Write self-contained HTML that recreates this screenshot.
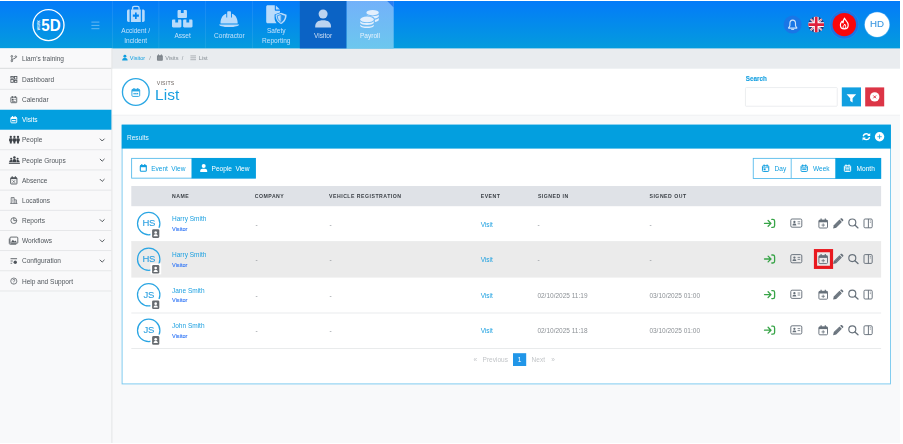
<!DOCTYPE html>
<html lang="en"><head><meta charset="utf-8"><title>Visits - List</title>
<style>
html,body{margin:0;padding:0}
body{width:903px;height:444px;position:relative;overflow:hidden;background:#fff;font-family:"Liberation Sans",sans-serif}
#app{position:absolute;left:0;top:1px;width:900px;height:442px;background:#f8f9fa}
.a{position:absolute;white-space:nowrap}
#ov{position:absolute;left:0;top:0}
#tx{position:absolute;left:0;top:0;width:903px;height:444px;will-change:transform}
.nvt{width:46.8px;text-align:center;font-size:6.56px;line-height:9.7px}
.st{font-size:6.56px;line-height:10px}
.bct{font-size:5.6px;line-height:7px;color:#868d94}
.bt{font-size:6.56px;line-height:8px}
.th{font-size:5.16px;line-height:6px;font-weight:bold;color:#3a3f45;letter-spacing:0.5px}
.nm{font-size:6.5px;line-height:8px;color:#1a9fe0}
.vs{font-size:5.6px;line-height:7px;color:#3478f6;-webkit-text-stroke:0.13px #3478f6}
.td{font-size:6.5px;line-height:8px;color:#8c9196}
.pg{font-size:6.5px;line-height:8px;color:#c2c5c8}
</style></head>
<body>
<div id="app"></div>
<div class="a" style="left:0px;top:48.4px;width:111.4px;height:394.6px;background:#f8f9fa"></div>
<div class="a" style="left:112.4px;top:48.4px;width:787.6px;height:20.3px;background:#e9ecef"></div>
<svg id="ov" width="903" height="444" viewBox="0 0 903 444">
<defs><linearGradient id="pg" x1="0" y1="0" x2="0" y2="1"><stop offset="0" stop-color="#73b1fa"/><stop offset="1" stop-color="#6cc7ee"/></linearGradient><clipPath id="fc"><circle cx="8" cy="8" r="8"/></clipPath><linearGradient id="hg" x1="0" y1="0" x2="0" y2="1"><stop offset="0" stop-color="#047bf9"/><stop offset="1" stop-color="#049cdd"/></linearGradient></defs>
<rect x="0" y="1" width="900" height="47.4" fill="url(#hg)"/>
<rect x="299.8" y="1" width="46.8" height="47.4" fill="#0b63c5"/>
<rect x="346.6" y="1" width="47.1" height="47.4" fill="url(#pg)"/>
<path d="M387.2 1H393.7V7.5Z" fill="#2a7ef2"/>
<rect x="112.2" y="1" width="0.6" height="47.4" fill="#fff" fill-opacity="0.14"/>
<rect x="158.6" y="1" width="0.6" height="47.4" fill="#fff" fill-opacity="0.14"/>
<rect x="205.4" y="1" width="0.6" height="47.4" fill="#fff" fill-opacity="0.14"/>
<rect x="252.4" y="1" width="0.6" height="47.4" fill="#fff" fill-opacity="0.14"/>
<circle cx="48.5" cy="25.1" r="15.5" fill="none" stroke="#fff" stroke-width="1.35"/>
<text x="41.2" y="30.7" textLength="19.4" lengthAdjust="spacingAndGlyphs" font-family="Liberation Sans, sans-serif" font-weight="bold" font-size="15.6" fill="#fff">5D</text>
<text transform="translate(39.8,30.3) rotate(-90)" textLength="10.2" lengthAdjust="spacingAndGlyphs" font-family="Liberation Sans, sans-serif" font-weight="bold" font-size="3.5" fill="#fff">WORK</text>
<path d="M91.4 22.1H99.4M91.4 25.4H99.4M91.4 28.7H99.4" stroke="#8ecbf6" stroke-width="0.7"/>
<svg x="127" y="5.7" width="17.7" height="16.3" viewBox="0 0 17.7 16.3" overflow="visible"><path d="M5.6 4V2.2C5.6 1.2 6.2 0.6 7.2 0.6H10.5C11.5 0.6 12.1 1.2 12.1 2.2V4" fill="none" stroke="#b9dbfb" stroke-width="1.3"/><path d="M0 5.4C0 4.4 0.7 3.7 1.7 3.7H2.6V16.3H1.7C0.7 16.3 0 15.6 0 14.6Z" fill="#b9dbfb"/><path d="M17.7 5.4C17.7 4.4 17 3.7 16 3.7H15.1V16.3H16C17 16.3 17.7 15.6 17.7 14.6Z" fill="#b9dbfb"/><path d="M3.9 3.7H13.8V16.3H3.9Z M8 6.7V8.9H5.8V11.1H8V13.3H9.7V11.1H11.9V8.9H9.7V6.7Z" fill="#b9dbfb" fill-rule="evenodd"/></svg>
<svg x="172" y="10" width="20.5" height="17.5" viewBox="0 0 20.5 17.5" overflow="visible"><path d="M6.75 0H8.85V3H11.649999999999999V0H13.75C14.45 0 14.95 0.5 14.95 1.2V6.9C14.95 7.6 14.45 8.1 13.75 8.1H6.75C6.05 8.1 5.55 7.6 5.55 6.9V1.2C5.55 0.5 6.05 0 6.75 0Z" fill="#b9dbfb"/><path d="M1.2 9.4H3.3V12.4H6.1V9.4H8.2C8.9 9.4 9.4 9.9 9.4 10.6V16.3C9.4 17 8.9 17.5 8.2 17.5H1.2C0.5 17.5 0 17 0 16.3V10.6C0 9.9 0.5 9.4 1.2 9.4Z" fill="#b9dbfb"/><path d="M12.299999999999999 9.4H14.399999999999999V12.4H17.2V9.4H19.299999999999997C20 9.4 20.5 9.9 20.5 10.6V16.3C20.5 17 20 17.5 19.299999999999997 17.5H12.299999999999999C11.6 17.5 11.1 17 11.1 16.3V10.6C11.1 9.9 11.6 9.4 12.299999999999999 9.4Z" fill="#b9dbfb"/></svg>
<svg x="218.9" y="11.1" width="20.4" height="16" viewBox="0 0 20.4 16" overflow="visible"><path d="M1.6 12.3C1.6 6.5 4.6 3.3 7.4 2.7V6.5H8.3V1.3C8.3 0.6 8.7 0.2 9.4 0.2H11C11.7 0.2 12.1 0.6 12.1 1.3V6.5H13V2.7C15.8 3.3 18.8 6.5 18.8 12.3Z" fill="#b9dbfb"/><path d="M0.2 13.3H20.2C20.2 14.6 16.5 15.9 10.2 15.9S0.2 14.6 0.2 13.3Z" fill="#b9dbfb"/></svg>
<svg x="266.2" y="5.3" width="20.6" height="18.8" viewBox="0 0 20.6 18.8" overflow="visible"><path d="M1.5 0H8.6V4.6C8.6 5.1 8.9 5.4 9.4 5.4H13.8V7.2L8.4 9.1V12.5C8.4 14.8 9.1 16.6 10.4 18H1.5C0.6 18 0 17.4 0 16.5V1.5C0 0.6 0.6 0 1.5 0Z" fill="#b9dbfb"/><path d="M9.7 0.1L13.7 4.2H9.7Z" fill="#b9dbfb"/><path d="M14.9 7.4L20.4 9.4C20.4 14 18.1 17.2 14.9 18.7C11.7 17.2 9.4 14 9.4 9.4Z" fill="#b9dbfb"/><path d="M14.9 9.1L18.8 10.5C18.7 13.7 17.2 15.9 14.9 17.1Z" fill="#1a8cec"/><path d="M14.9 9.1L11 10.5C11.1 13.7 12.6 15.9 14.9 17.1Z" fill="#b9dbfb" stroke="#1a8cec" stroke-width="0.8"/></svg>
<svg x="315.2" y="9.5" width="15.8" height="18" viewBox="0 0 15.8 18" overflow="visible"><circle cx="7.9" cy="4.5" r="4.5" fill="#bcd3f0"/><path d="M0 18V16.8C0 12.8 3 10.7 7.9 10.7S15.8 12.8 15.8 16.8V18Z" fill="#bcd3f0"/></svg>
<svg x="360" y="10" width="19" height="18" viewBox="0 0 19 18" overflow="visible"><g fill="#e3effd"><ellipse cx="12.6" cy="2.7" rx="6.2" ry="2.7"/><path d="M6.4 4.5C7.6 6.7 17.6 6.7 18.8 4.5V6.3C18.3 7.5 16.6 8.2 14.6 8.5C14.3 7.3 12 6.3 8.6 6.1C7.4 5.7 6.6 5.1 6.4 4.5Z"/><path d="M14.9 9.7C16.7 9.4 18.2 8.8 18.8 8V9.9C18.3 11 16.8 11.7 14.9 12Z"/><ellipse cx="7" cy="9.4" rx="6.8" ry="2.8"/><path d="M0.2 11.2C1.6 13.7 12.4 13.7 13.8 11.2V13C12.4 15.5 1.6 15.5 0.2 13Z"/><path d="M0.2 14.7C1.6 17.2 12.4 17.2 13.8 14.7V15.9C12.4 18.6 1.6 18.6 0.2 15.9Z"/></g></svg>
<circle cx="792.6" cy="24.6" r="9" fill="#1976e6"/>
<svg x="787.9" y="19.4" width="9.6" height="11" viewBox="0 0 9.6 11" overflow="visible"><path d="M4.8 0.7C2.9 0.7 2 2.2 2 4V6.2C2 7.1 1.5 7.7 0.7 8.3V8.7H8.9V8.3C8.1 7.7 7.6 7.1 7.6 6.2V4C7.6 2.2 6.7 0.7 4.8 0.7Z" fill="none" stroke="#cde4fb" stroke-width="1.15" stroke-linejoin="round"/><path d="M3.7 10.1H5.9" stroke="#cde4fb" stroke-width="0.9" stroke-linecap="round"/></svg>
<svg x="808.2" y="16.6" width="16" height="16" viewBox="0 0 16 16"><g clip-path="url(#fc)"><rect width="16" height="16" fill="#28397a"/><path d="M0 0L16 16M16 0L0 16" stroke="#fff" stroke-width="1.9"/><path d="M0 0L16 16M16 0L0 16" stroke="#d8203a" stroke-width="0.7"/><path d="M8 0V16M0 8H16" stroke="#fff" stroke-width="4.8"/><path d="M8 0V16M0 8H16" stroke="#e0203c" stroke-width="2.7"/></g></svg>
<circle cx="844.3" cy="24.6" r="14" fill="#1a74e6"/>
<circle cx="844.3" cy="24.6" r="14.6" fill="none" stroke="#2a86ee" stroke-width="0.8" stroke-opacity="0.6"/>
<circle cx="844.3" cy="24.6" r="11.7" fill="#fb0509"/>
<svg x="839.8" y="17.6" width="9" height="11.8" viewBox="0 0 9 11.8" overflow="visible"><path d="M4.7 0.6C5.1 2.4 8.4 4 8.4 7.3C8.4 9.7 6.7 11.2 4.5 11.2S0.6 9.7 0.6 7.3C0.6 5.7 1.4 4.5 2.3 3.5C2.5 4.3 2.8 4.8 3.3 5.2C3.4 3.4 3.9 1.8 4.7 0.6Z" fill="none" stroke="#fff" stroke-width="1.2" stroke-linejoin="round"/><path d="M4.5 11C3.3 10.7 2.9 9.4 3.7 8.4C4.3 7.7 4.8 7.2 4.8 6.4C6 7.5 6.5 10.3 4.5 11Z" fill="none" stroke="#fff" stroke-width="1" stroke-linejoin="round"/></svg>
<circle cx="877.1" cy="24.6" r="12.9" fill="#d3ebfc" fill-opacity="0.35"/>
<circle cx="877.1" cy="24.6" r="12.3" fill="#fff"/>
<rect x="0" y="48.4" width="111.4" height="242.6" fill="#f9f9fa"/>
<rect x="111.4" y="48.4" width="1" height="394.6" fill="#e3e5e7"/>
<rect x="0" y="109.74" width="111.4" height="19.97" fill="#039fdf"/>
<rect x="0" y="67.8" width="111.4" height="1" fill="#d9dbdd"/>
<rect x="0" y="88.87" width="111.4" height="0.8" fill="#e1e3e5"/>
<rect x="0" y="149.38" width="111.4" height="0.8" fill="#e1e3e5"/>
<rect x="0" y="169.55" width="111.4" height="0.8" fill="#e1e3e5"/>
<rect x="0" y="189.72" width="111.4" height="0.8" fill="#e1e3e5"/>
<rect x="0" y="209.89" width="111.4" height="0.8" fill="#e1e3e5"/>
<rect x="0" y="230.06" width="111.4" height="0.8" fill="#e1e3e5"/>
<rect x="0" y="250.23" width="111.4" height="0.8" fill="#e1e3e5"/>
<rect x="0" y="270.4" width="111.4" height="0.8" fill="#e1e3e5"/>
<rect x="0" y="290.57" width="111.4" height="0.8" fill="#e1e3e5"/>
<svg x="9.9" y="54.7" width="7.8" height="7.8" viewBox="0 0 24 24" overflow="visible"><circle cx="6" cy="5" r="2.6" fill="none" stroke="#50565c" stroke-width="2.4"/><circle cx="6" cy="19" r="2.6" fill="none" stroke="#50565c" stroke-width="2.4"/><circle cx="18" cy="6" r="2.6" fill="none" stroke="#50565c" stroke-width="2.4"/><path d="M6 8V16M18 9C18 13 6 12 6 16" fill="none" stroke="#50565c" stroke-width="2.4"/></svg>
<svg x="9.9" y="75.5" width="7.8" height="7.8" viewBox="0 0 24 24" overflow="visible"><g fill="none" stroke="#50565c" stroke-width="2.6"><rect x="3" y="3" width="7.5" height="5"/><rect x="14" y="3" width="7.5" height="8"/><rect x="3" y="12" width="7.5" height="9"/><rect x="14" y="15" width="7.5" height="6"/></g></svg>
<svg x="9.9" y="95.7" width="7.8" height="7.8" viewBox="0 0 24 24" overflow="visible"><rect x="3" y="4.5" width="18" height="17" rx="1.5" fill="none" stroke="#50565c" stroke-width="2.6"/><path d="M7.5 1V7.5M16.5 1V7.5" stroke="#50565c" stroke-width="2.8"/><rect x="6" y="9.5" width="5.5" height="5.5" fill="#50565c"/><path d="M14 11.5H18M6.5 18H17.5" stroke="#50565c" stroke-width="2"/></svg>
<svg x="9.9" y="115.7" width="7.8" height="7.8" viewBox="0 0 24 24" overflow="visible"><rect x="3" y="5" width="18" height="17" rx="2.5" fill="none" stroke="#fff" stroke-width="2.8"/><rect x="3" y="5" width="18" height="5" fill="#fff"/><rect x="6.5" y="1" width="3" height="6.5" rx="1" fill="#fff"/><rect x="14.5" y="1" width="3" height="6.5" rx="1" fill="#fff"/><rect x="6.5" y="13.5" width="11" height="3.6" fill="#fff"/></svg>
<svg x="8.9" y="135.8" width="11" height="7.8" viewBox="0 0 11 7.8" overflow="visible"><g fill="#3d4248"><circle cx="1.9" cy="1.15" r="1.15"/><rect x="0.15" y="2.5" width="3.5" height="3.4" rx="1.1"/><rect x="0.95" y="4.8" width="1.9" height="2.9" rx="0.3"/><circle cx="5.5" cy="1.15" r="1.15"/><rect x="3.75" y="2.5" width="3.5" height="3.4" rx="1.1"/><rect x="4.55" y="4.8" width="1.9" height="2.9" rx="0.3"/><circle cx="9.1" cy="1.15" r="1.15"/><rect x="7.35" y="2.5" width="3.5" height="3.4" rx="1.1"/><rect x="8.15" y="4.8" width="1.9" height="2.9" rx="0.3"/></g></svg>
<path d="M99.9 138.7L102.2 141L104.5 138.7" fill="none" stroke="#4a4f54" stroke-width="0.95"/>
<svg x="8.9" y="156.1" width="11" height="7.8" viewBox="0 0 11 7.8" overflow="visible"><g fill="#3d4248"><circle cx="5.5" cy="1.3" r="1.25"/><circle cx="2.3" cy="2.6" r="1.05"/><circle cx="8.7" cy="2.6" r="1.05"/><path d="M3.3 6.2C3.3 3.9 4.2 2.9 5.5 2.9S7.7 3.9 7.7 6.2Z"/><path d="M0.3 6.2C0.3 4.7 1 3.9 2.3 3.9C2.8 3.9 3.1 4 3.3 4.3L2.9 6.2Z"/><path d="M10.7 6.2C10.7 4.7 10 3.9 8.7 3.9C8.2 3.9 7.9 4 7.7 4.3L8.1 6.2Z"/><rect x="0" y="6.7" width="11" height="1"/></g></svg>
<path d="M99.9 158.9L102.2 161.2L104.5 158.9" fill="none" stroke="#4a4f54" stroke-width="0.95"/>
<svg x="9.6" y="176.1" width="8.4" height="8.4" viewBox="0 0 24 24" overflow="visible"><rect x="3" y="5" width="18" height="17.5" rx="1.5" fill="none" stroke="#50565c" stroke-width="2.6"/><path d="M7.5 0.5V6M16.5 0.5V6" stroke="#50565c" stroke-width="3.2"/><rect x="3" y="4" width="18" height="4.5" fill="#50565c"/><path d="M8.5 12L15.5 19M15.5 12L8.5 19" stroke="#50565c" stroke-width="2.2"/></svg>
<path d="M99.9 179.1L102.2 181.4L104.5 179.1" fill="none" stroke="#4a4f54" stroke-width="0.95"/>
<svg x="9.9" y="196.6" width="7.8" height="7.8" viewBox="0 0 24 24" overflow="visible"><g fill="none" stroke="#50565c" stroke-width="2.2"><path d="M4 21V3H13V21M13 10H20V21M1 21H23"/><path d="M7.5 7H9.5M7.5 11.5H9.5M7.5 16H9.5M16 14H17.5M16 17.5H17.5" stroke-width="2"/></g></svg>
<svg x="9.9" y="216.7" width="7.8" height="7.8" viewBox="0 0 24 24" overflow="visible"><circle cx="12" cy="12" r="9" fill="none" stroke="#50565c" stroke-width="2.4"/><path d="M12 3V12H21" fill="none" stroke="#50565c" stroke-width="2.4"/></svg>
<path d="M99.9 219.4L102.2 221.7L104.5 219.4" fill="none" stroke="#4a4f54" stroke-width="0.95"/>
<svg x="8.8" y="236.1" width="9.4" height="9.4" viewBox="0 0 24 24" overflow="visible"><rect x="3" y="2.5" width="20" height="16" rx="2.5" fill="none" stroke="#50565c" stroke-width="2.2"/><path d="M1.2 6.5V18.5C1.2 20.2 2 21 3.7 21H19" fill="none" stroke="#50565c" stroke-width="2"/><path d="M5 16.5L10.5 9.5L14 13.5L16.5 11.5L21 16.5Z" fill="#50565c"/></svg>
<path d="M99.9 239.6L102.2 241.9L104.5 239.6" fill="none" stroke="#4a4f54" stroke-width="0.95"/>
<svg x="9.9" y="257.1" width="7.8" height="7.8" viewBox="0 0 24 24" overflow="visible"><path d="M2 5H22" stroke="#50565c" stroke-width="2.8"/><path d="M2 12H9M2 19H7" stroke="#50565c" stroke-width="2.4"/><circle cx="16.5" cy="16" r="5.2" fill="#50565c"/></svg>
<path d="M99.9 259.8L102.2 262.1L104.5 259.8" fill="none" stroke="#4a4f54" stroke-width="0.95"/>
<svg x="9.9" y="277.2" width="7.8" height="7.8" viewBox="0 0 24 24" overflow="visible"><circle cx="12" cy="12" r="9.5" fill="none" stroke="#50565c" stroke-width="2.2"/><path d="M9 9.5C9 5.5 15 5.5 15 9.5C15 11.5 12 11.8 12 14.5" fill="none" stroke="#50565c" stroke-width="2.2"/><circle cx="12" cy="18" r="1.4" fill="#50565c"/></svg>
<svg x="121.6" y="54.4" width="6.6" height="6.6" viewBox="0 0 24 24" overflow="visible"><circle cx="12" cy="7" r="5.4" fill="#109fe0"/><path d="M2 22.5C2 15.5 6.5 13.5 12 13.5S22 15.5 22 22.5Z" fill="#109fe0"/></svg>
<svg x="156.2" y="54" width="7.4" height="7.4" viewBox="0 0 24 24" overflow="visible"><rect x="2.5" y="4" width="19" height="18" rx="2.5" fill="#7d848b"/><rect x="6" y="1" width="3" height="6" rx="1" fill="#7d848b"/><rect x="15" y="1" width="3" height="6" rx="1" fill="#7d848b"/><path d="M6 12.5H18M6 16.5H18" stroke="#a9aeb3" stroke-width="1.2"/></svg>
<path d="M190.4 55.9H196M190.4 57.8H196M190.4 59.7H196" stroke="#8f959b" stroke-width="0.65"/>
<rect x="112.4" y="68.7" width="787.6" height="46.1" fill="#fff"/>
<rect x="112.4" y="114.8" width="787.6" height="0.7" fill="#eceef0"/>
<circle cx="135.8" cy="92" r="13.35" fill="none" stroke="#2ca8e4" stroke-width="1.35"/>
<svg x="130.5" y="87.1" width="10.6" height="10.4" viewBox="0 0 24 24" overflow="visible"><rect x="3" y="5" width="18" height="16.5" rx="2.5" fill="none" stroke="#29a6e3" stroke-width="2.2"/><rect x="3" y="5" width="18" height="5" fill="#29a6e3"/><rect x="6.5" y="2" width="2.6" height="5" rx="1" fill="#29a6e3"/><rect x="14.9" y="2" width="2.6" height="5" rx="1" fill="#29a6e3"/><rect x="6.5" y="13.5" width="11" height="3.2" fill="#29a6e3"/><path d="M10 13.5V16.7M14 13.5V16.7" stroke="#fff" stroke-width="0.8"/></svg>
<rect x="745.45" y="87.55" width="91.8" height="18.7" rx="0.8" fill="#fff" stroke="#dfe2e5" stroke-width="0.6"/>
<rect x="841.8" y="87.4" width="19.2" height="19" fill="#119fe0"/>
<path d="M846.6 94.2H856.2L852.6 98.3V102.6L850.2 101V98.3Z" fill="#fff"/>
<rect x="865.2" y="87.4" width="19" height="19" fill="#dc3546"/>
<circle cx="874.7" cy="96.9" r="4.7" fill="#fff"/><path d="M873.3 95.5L876.1 98.3M876.1 95.5L873.3 98.3" stroke="#dc3546" stroke-width="1"/>
<rect x="122.1" y="125.1" width="768.4" height="258.8" fill="#fff" stroke="#74c7ee" stroke-width="0.9"/>
<rect x="121.7" y="124.7" width="769.2" height="23.9" fill="#039fdf"/>
<svg x="861.9" y="132.3" width="9" height="8.8" viewBox="0 0 20 19" overflow="visible"><g fill="none" stroke="#fff" stroke-width="3"><path d="M3 8.5C3.8 5 6.5 3 10 3C12.5 3 14.5 4 16 6"/><path d="M17 10.5C16.2 14 13.5 16 10 16C7.5 16 5.5 15 4 13"/></g><path d="M18.5 1V8H11.5Z" fill="#fff"/><path d="M1.5 18V11H8.5Z" fill="#fff"/></svg>
<circle cx="879.55" cy="136.7" r="4.7" fill="#fff"/><path d="M879.55 134.5V138.9M877.35 136.7H881.75" stroke="#0a9fdf" stroke-width="0.8"/>
<rect x="131.65" y="158.35" width="123.8" height="19.8" fill="#fff" stroke="#4db7ea" stroke-width="0.85"/>
<rect x="191.5" y="158" width="64.3" height="20.4" fill="#039fdf"/>
<svg x="139.7" y="164.1" width="7.2" height="7.8" viewBox="0 0 7.2 7.8" overflow="visible"><rect x="0.6" y="1.5" width="6" height="5.7" rx="0.9" fill="none" stroke="#119fe0" stroke-width="1.1"/><rect x="0.3" y="1.2" width="6.6" height="1.9" fill="#119fe0"/><path d="M2.1 0V2M5.1 0V2" stroke="#119fe0" stroke-width="1.1"/></svg>
<svg x="200.2" y="164.1" width="7" height="7.8" viewBox="0 0 7 7.8" overflow="visible"><circle cx="3.5" cy="2" r="2" fill="#fff"/><path d="M0 7.8V6.9C0 5.5 1.1 4.7 2.2 4.7H4.8C5.9 4.7 7 5.5 7 6.9V7.8Z" fill="#fff"/></svg>
<rect x="753.25" y="158.35" width="127.5" height="20.2" fill="#fff" stroke="#4db7ea" stroke-width="0.85"/>
<rect x="790.7" y="158.35" width="1" height="20.2" fill="#6cc4ee"/>
<rect x="835.3" y="158" width="45.8" height="20.8" fill="#039fdf"/>
<svg x="761.9" y="164.5" width="7.4" height="7.4" viewBox="0 0 7.4 7.4" overflow="visible"><rect x="0.55" y="1.25" width="6.3" height="5.7" rx="0.8" fill="none" stroke="#119fe0" stroke-width="1"/><path d="M2.2 0.1V2.2M5.2 0.1V2.2" stroke="#119fe0" stroke-width="1.05"/><path d="M0.6 3.1H6.8" stroke="#119fe0" stroke-width="0.6"/><rect x="1.7" y="3.9" width="2" height="1.8" fill="#119fe0"/></svg>
<svg x="800.5" y="164.5" width="7.4" height="7.4" viewBox="0 0 7.4 7.4" overflow="visible"><rect x="0.55" y="1.25" width="6.3" height="5.7" rx="0.8" fill="none" stroke="#119fe0" stroke-width="1"/><path d="M2.2 0.1V2.2M5.2 0.1V2.2" stroke="#119fe0" stroke-width="1.05"/><path d="M0.6 3.1H6.8" stroke="#119fe0" stroke-width="0.6"/><rect x="1.7" y="4" width="4" height="1.3" fill="#119fe0"/></svg>
<svg x="843.8" y="164.5" width="7.4" height="7.4" viewBox="0 0 7.4 7.4" overflow="visible"><rect x="0.55" y="1.25" width="6.3" height="5.7" rx="0.8" fill="none" stroke="#fff" stroke-width="1"/><path d="M2.2 0.1V2.2M5.2 0.1V2.2" stroke="#fff" stroke-width="1.05"/><path d="M0.6 3.1H6.8" stroke="#fff" stroke-width="0.6"/><rect x="1.7" y="3.8" width="4" height="0.8" fill="#fff"/><rect x="1.7" y="5.1" width="4" height="0.8" fill="#fff"/></svg>
<rect x="131.3" y="186" width="749.8" height="20.2" fill="#dfe2e7"/>
<rect x="131.3" y="241.4" width="749.8" height="0.8" fill="#e4e6e8"/>
<circle cx="148.7" cy="223.6" r="11.2" fill="none" stroke="#2aa5e3" stroke-width="1.25"/>
<rect x="150.4" y="227.8" width="10.8" height="11" fill="#fff"/>
<rect x="152.1" y="229.3" width="7.2" height="8.6" rx="1.3" fill="#666b70"/><circle cx="155.7" cy="232.5" r="1.35" fill="#fff"/><path d="M153.6 236.3C153.6 234.7 154.5 234.3 155.7 234.3S157.8 234.7 157.8 236.3Z" fill="#fff"/>
<svg x="764.2" y="218.8" width="11" height="9.2" viewBox="0 0 11 9.2" overflow="visible"><path d="M0.3 4.6H6.4M3.9 1.7L6.8 4.6L3.9 7.5" fill="none" stroke="#37a447" stroke-width="1.3" stroke-linecap="round" stroke-linejoin="round"/><path d="M7.6 0.6H8.7C9.8 0.6 10.4 1.2 10.4 2.3V6.9C10.4 8 9.8 8.6 8.7 8.6H7.6" fill="none" stroke="#37a447" stroke-width="1.3" stroke-linecap="round"/></svg>
<svg x="790.3" y="218.5" width="12" height="9.2" viewBox="0 0 12 9.2" overflow="visible"><rect x="0.5" y="0.5" width="11" height="8.2" rx="1.3" fill="none" stroke="#66707a" stroke-width="0.95"/><circle cx="4.1" cy="3.5" r="1.15" fill="#66707a"/><path d="M2.2 6.9C2.2 5.4 3 5.1 4.1 5.1S6 5.4 6 6.9Z" fill="#66707a"/><path d="M7.3 3.3H9.9M7.3 5.3H9.9" stroke="#66707a" stroke-width="0.8"/></svg>
<svg x="818.4" y="218.5" width="9.6" height="10" viewBox="0 0 9.6 10" overflow="visible"><rect x="0.5" y="1.6" width="8.6" height="7.9" rx="1" fill="none" stroke="#66707a" stroke-width="0.95"/><rect x="0.5" y="1.5" width="8.6" height="2.3" fill="#66707a"/><path d="M2.7 0V2M6.9 0V2" stroke="#66707a" stroke-width="1.2"/><path d="M4.8 4.9V8.3M3.1 6.6H6.5" stroke="#66707a" stroke-width="0.8"/></svg>
<svg x="832.9" y="218.2" width="10.5" height="10.4" viewBox="0 0 10.5 10.4" overflow="visible"><path d="M0.2 10.2L0.9 7.1L6.6 1.4L9 3.8L3.3 9.5Z" fill="#66707a"/><path d="M7.2 0.8L7.8 0.25C8.2 -0.1 8.8 -0.1 9.2 0.25L10.2 1.25C10.55 1.65 10.55 2.2 10.2 2.6L9.6 3.2Z" fill="#66707a"/><path d="M2 7.4L6.7 2.7M3 8.4L7.7 3.7" stroke="#fff" stroke-opacity="0.35" stroke-width="0.4"/></svg>
<svg x="848" y="218.2" width="10.6" height="10.2" viewBox="0 0 10.6 10.2" overflow="visible"><circle cx="4.3" cy="4.3" r="3.5" fill="none" stroke="#66707a" stroke-width="1.15"/><path d="M6.9 6.9L10 9.7" stroke="#66707a" stroke-width="1.3" stroke-linecap="round"/></svg>
<svg x="863.5" y="218.5" width="9.2" height="9.8" viewBox="0 0 9.2 9.8" overflow="visible"><rect x="0.5" y="0.5" width="8.2" height="8.8" rx="1.1" fill="none" stroke="#66707a" stroke-width="0.95"/><path d="M4.9 0.5V9.3" stroke="#66707a" stroke-width="0.95"/><path d="M6.3 2.4H7.5M6.3 3.9H7.5" stroke="#66707a" stroke-width="0.6"/></svg>
<rect x="131.3" y="241.3" width="749.8" height="36.3" fill="#ebebeb"/>
<circle cx="148.7" cy="259.2" r="11.2" fill="none" stroke="#2aa5e3" stroke-width="1.25"/>
<rect x="150.4" y="263.4" width="10.8" height="11" fill="#fff"/>
<rect x="152.1" y="264.9" width="7.2" height="8.6" rx="1.3" fill="#666b70"/><circle cx="155.7" cy="268.1" r="1.35" fill="#fff"/><path d="M153.6 271.9C153.6 270.3 154.5 269.9 155.7 269.9S157.8 270.3 157.8 271.9Z" fill="#fff"/>
<svg x="764.2" y="254.4" width="11" height="9.2" viewBox="0 0 11 9.2" overflow="visible"><path d="M0.3 4.6H6.4M3.9 1.7L6.8 4.6L3.9 7.5" fill="none" stroke="#37a447" stroke-width="1.3" stroke-linecap="round" stroke-linejoin="round"/><path d="M7.6 0.6H8.7C9.8 0.6 10.4 1.2 10.4 2.3V6.9C10.4 8 9.8 8.6 8.7 8.6H7.6" fill="none" stroke="#37a447" stroke-width="1.3" stroke-linecap="round"/></svg>
<svg x="790.3" y="254.1" width="12" height="9.2" viewBox="0 0 12 9.2" overflow="visible"><rect x="0.5" y="0.5" width="11" height="8.2" rx="1.3" fill="none" stroke="#66707a" stroke-width="0.95"/><circle cx="4.1" cy="3.5" r="1.15" fill="#66707a"/><path d="M2.2 6.9C2.2 5.4 3 5.1 4.1 5.1S6 5.4 6 6.9Z" fill="#66707a"/><path d="M7.3 3.3H9.9M7.3 5.3H9.9" stroke="#66707a" stroke-width="0.8"/></svg>
<rect x="815.5" y="250.65" width="16" height="16.7" fill="none" stroke="#e8191f" stroke-width="3.2"/>
<svg x="818.4" y="254.1" width="9.6" height="10" viewBox="0 0 9.6 10" overflow="visible"><rect x="0.5" y="1.6" width="8.6" height="7.9" rx="1" fill="none" stroke="#66707a" stroke-width="0.95"/><rect x="0.5" y="1.5" width="8.6" height="2.3" fill="#66707a"/><path d="M2.7 0V2M6.9 0V2" stroke="#66707a" stroke-width="1.2"/><path d="M4.8 4.9V8.3M3.1 6.6H6.5" stroke="#66707a" stroke-width="0.8"/></svg>
<svg x="832.9" y="253.8" width="10.5" height="10.4" viewBox="0 0 10.5 10.4" overflow="visible"><path d="M0.2 10.2L0.9 7.1L6.6 1.4L9 3.8L3.3 9.5Z" fill="#66707a"/><path d="M7.2 0.8L7.8 0.25C8.2 -0.1 8.8 -0.1 9.2 0.25L10.2 1.25C10.55 1.65 10.55 2.2 10.2 2.6L9.6 3.2Z" fill="#66707a"/><path d="M2 7.4L6.7 2.7M3 8.4L7.7 3.7" stroke="#fff" stroke-opacity="0.35" stroke-width="0.4"/></svg>
<svg x="848" y="253.8" width="10.6" height="10.2" viewBox="0 0 10.6 10.2" overflow="visible"><circle cx="4.3" cy="4.3" r="3.5" fill="none" stroke="#66707a" stroke-width="1.15"/><path d="M6.9 6.9L10 9.7" stroke="#66707a" stroke-width="1.3" stroke-linecap="round"/></svg>
<svg x="863.5" y="254.1" width="9.2" height="9.8" viewBox="0 0 9.2 9.8" overflow="visible"><rect x="0.5" y="0.5" width="8.2" height="8.8" rx="1.1" fill="none" stroke="#66707a" stroke-width="0.95"/><path d="M4.9 0.5V9.3" stroke="#66707a" stroke-width="0.95"/><path d="M6.3 2.4H7.5M6.3 3.9H7.5" stroke="#66707a" stroke-width="0.6"/></svg>
<rect x="131.3" y="312.6" width="749.8" height="0.8" fill="#e4e6e8"/>
<circle cx="148.7" cy="294.8" r="11.2" fill="none" stroke="#2aa5e3" stroke-width="1.25"/>
<rect x="150.4" y="299" width="10.8" height="11" fill="#fff"/>
<rect x="152.1" y="300.5" width="7.2" height="8.6" rx="1.3" fill="#666b70"/><circle cx="155.7" cy="303.7" r="1.35" fill="#fff"/><path d="M153.6 307.5C153.6 305.9 154.5 305.5 155.7 305.5S157.8 305.9 157.8 307.5Z" fill="#fff"/>
<svg x="764.2" y="290" width="11" height="9.2" viewBox="0 0 11 9.2" overflow="visible"><path d="M0.3 4.6H6.4M3.9 1.7L6.8 4.6L3.9 7.5" fill="none" stroke="#37a447" stroke-width="1.3" stroke-linecap="round" stroke-linejoin="round"/><path d="M7.6 0.6H8.7C9.8 0.6 10.4 1.2 10.4 2.3V6.9C10.4 8 9.8 8.6 8.7 8.6H7.6" fill="none" stroke="#37a447" stroke-width="1.3" stroke-linecap="round"/></svg>
<svg x="790.3" y="289.7" width="12" height="9.2" viewBox="0 0 12 9.2" overflow="visible"><rect x="0.5" y="0.5" width="11" height="8.2" rx="1.3" fill="none" stroke="#66707a" stroke-width="0.95"/><circle cx="4.1" cy="3.5" r="1.15" fill="#66707a"/><path d="M2.2 6.9C2.2 5.4 3 5.1 4.1 5.1S6 5.4 6 6.9Z" fill="#66707a"/><path d="M7.3 3.3H9.9M7.3 5.3H9.9" stroke="#66707a" stroke-width="0.8"/></svg>
<svg x="818.4" y="289.7" width="9.6" height="10" viewBox="0 0 9.6 10" overflow="visible"><rect x="0.5" y="1.6" width="8.6" height="7.9" rx="1" fill="none" stroke="#66707a" stroke-width="0.95"/><rect x="0.5" y="1.5" width="8.6" height="2.3" fill="#66707a"/><path d="M2.7 0V2M6.9 0V2" stroke="#66707a" stroke-width="1.2"/><path d="M4.8 4.9V8.3M3.1 6.6H6.5" stroke="#66707a" stroke-width="0.8"/></svg>
<svg x="832.9" y="289.4" width="10.5" height="10.4" viewBox="0 0 10.5 10.4" overflow="visible"><path d="M0.2 10.2L0.9 7.1L6.6 1.4L9 3.8L3.3 9.5Z" fill="#66707a"/><path d="M7.2 0.8L7.8 0.25C8.2 -0.1 8.8 -0.1 9.2 0.25L10.2 1.25C10.55 1.65 10.55 2.2 10.2 2.6L9.6 3.2Z" fill="#66707a"/><path d="M2 7.4L6.7 2.7M3 8.4L7.7 3.7" stroke="#fff" stroke-opacity="0.35" stroke-width="0.4"/></svg>
<svg x="848" y="289.4" width="10.6" height="10.2" viewBox="0 0 10.6 10.2" overflow="visible"><circle cx="4.3" cy="4.3" r="3.5" fill="none" stroke="#66707a" stroke-width="1.15"/><path d="M6.9 6.9L10 9.7" stroke="#66707a" stroke-width="1.3" stroke-linecap="round"/></svg>
<svg x="863.5" y="289.7" width="9.2" height="9.8" viewBox="0 0 9.2 9.8" overflow="visible"><rect x="0.5" y="0.5" width="8.2" height="8.8" rx="1.1" fill="none" stroke="#66707a" stroke-width="0.95"/><path d="M4.9 0.5V9.3" stroke="#66707a" stroke-width="0.95"/><path d="M6.3 2.4H7.5M6.3 3.9H7.5" stroke="#66707a" stroke-width="0.6"/></svg>
<rect x="131.3" y="348.2" width="749.8" height="0.8" fill="#e4e6e8"/>
<circle cx="148.7" cy="330.4" r="11.2" fill="none" stroke="#2aa5e3" stroke-width="1.25"/>
<rect x="150.4" y="334.6" width="10.8" height="11" fill="#fff"/>
<rect x="152.1" y="336.1" width="7.2" height="8.6" rx="1.3" fill="#666b70"/><circle cx="155.7" cy="339.3" r="1.35" fill="#fff"/><path d="M153.6 343.1C153.6 341.5 154.5 341.1 155.7 341.1S157.8 341.5 157.8 343.1Z" fill="#fff"/>
<svg x="764.2" y="325.6" width="11" height="9.2" viewBox="0 0 11 9.2" overflow="visible"><path d="M0.3 4.6H6.4M3.9 1.7L6.8 4.6L3.9 7.5" fill="none" stroke="#37a447" stroke-width="1.3" stroke-linecap="round" stroke-linejoin="round"/><path d="M7.6 0.6H8.7C9.8 0.6 10.4 1.2 10.4 2.3V6.9C10.4 8 9.8 8.6 8.7 8.6H7.6" fill="none" stroke="#37a447" stroke-width="1.3" stroke-linecap="round"/></svg>
<svg x="790.3" y="325.3" width="12" height="9.2" viewBox="0 0 12 9.2" overflow="visible"><rect x="0.5" y="0.5" width="11" height="8.2" rx="1.3" fill="none" stroke="#66707a" stroke-width="0.95"/><circle cx="4.1" cy="3.5" r="1.15" fill="#66707a"/><path d="M2.2 6.9C2.2 5.4 3 5.1 4.1 5.1S6 5.4 6 6.9Z" fill="#66707a"/><path d="M7.3 3.3H9.9M7.3 5.3H9.9" stroke="#66707a" stroke-width="0.8"/></svg>
<svg x="818.4" y="325.3" width="9.6" height="10" viewBox="0 0 9.6 10" overflow="visible"><rect x="0.5" y="1.6" width="8.6" height="7.9" rx="1" fill="none" stroke="#66707a" stroke-width="0.95"/><rect x="0.5" y="1.5" width="8.6" height="2.3" fill="#66707a"/><path d="M2.7 0V2M6.9 0V2" stroke="#66707a" stroke-width="1.2"/><path d="M4.8 4.9V8.3M3.1 6.6H6.5" stroke="#66707a" stroke-width="0.8"/></svg>
<svg x="832.9" y="325" width="10.5" height="10.4" viewBox="0 0 10.5 10.4" overflow="visible"><path d="M0.2 10.2L0.9 7.1L6.6 1.4L9 3.8L3.3 9.5Z" fill="#66707a"/><path d="M7.2 0.8L7.8 0.25C8.2 -0.1 8.8 -0.1 9.2 0.25L10.2 1.25C10.55 1.65 10.55 2.2 10.2 2.6L9.6 3.2Z" fill="#66707a"/><path d="M2 7.4L6.7 2.7M3 8.4L7.7 3.7" stroke="#fff" stroke-opacity="0.35" stroke-width="0.4"/></svg>
<svg x="848" y="325" width="10.6" height="10.2" viewBox="0 0 10.6 10.2" overflow="visible"><circle cx="4.3" cy="4.3" r="3.5" fill="none" stroke="#66707a" stroke-width="1.15"/><path d="M6.9 6.9L10 9.7" stroke="#66707a" stroke-width="1.3" stroke-linecap="round"/></svg>
<svg x="863.5" y="325.3" width="9.2" height="9.8" viewBox="0 0 9.2 9.8" overflow="visible"><rect x="0.5" y="0.5" width="8.2" height="8.8" rx="1.1" fill="none" stroke="#66707a" stroke-width="0.95"/><path d="M4.9 0.5V9.3" stroke="#66707a" stroke-width="0.95"/><path d="M6.3 2.4H7.5M6.3 3.9H7.5" stroke="#66707a" stroke-width="0.6"/></svg>
<rect x="513" y="353.2" width="13.2" height="12.8" fill="#2196e8"/>
</svg>
<div id="tx">
<div class="a nvt" style="left:112.3px;top:26px;color:#c3e1fb">Accident /<br>Incident</div>
<div class="a nvt" style="left:159.2px;top:31px;color:#c3e1fb">Asset</div>
<div class="a nvt" style="left:206px;top:31px;color:#c3e1fb">Contractor</div>
<div class="a nvt" style="left:252.9px;top:26px;color:#c3e1fb">Safety<br>Reporting</div>
<div class="a nvt" style="left:299.7px;top:31px;color:#cfdff4">Visitor</div>
<div class="a nvt" style="left:346.6px;top:31px;color:#e6f2fd">Payroll</div>
<div class="a " style="left:864.8px;top:19px;width:24.6px;text-align:center;font-size:9.7px;line-height:10px;color:#3a97e0;-webkit-text-stroke:0.1px #3a97e0">HD</div>
<div class="a st" style="left:22px;top:54px;color:#50565c">Liam's training</div>
<div class="a st" style="left:22px;top:75px;color:#50565c">Dashboard</div>
<div class="a st" style="left:22px;top:95px;color:#50565c">Calendar</div>
<div class="a st" style="left:22px;top:115px;color:#fff">Visits</div>
<div class="a st" style="left:22px;top:135px;color:#50565c">People</div>
<div class="a st" style="left:22px;top:156px;color:#50565c">People Groups</div>
<div class="a st" style="left:22px;top:176px;color:#50565c">Absence</div>
<div class="a st" style="left:22px;top:196px;color:#50565c">Locations</div>
<div class="a st" style="left:22px;top:216px;color:#50565c">Reports</div>
<div class="a st" style="left:22px;top:236px;color:#50565c">Workflows</div>
<div class="a st" style="left:22px;top:256px;color:#50565c">Configuration</div>
<div class="a st" style="left:22px;top:277px;color:#50565c">Help and Support</div>
<div class="a bct" style="left:129.8px;top:55px;color:#109fe0">Visitor</div>
<div class="a bct" style="left:149.2px;top:55px;">/</div>
<div class="a bct" style="left:165.2px;top:55px;">Visits</div>
<div class="a bct" style="left:181.8px;top:55px;">/</div>
<div class="a bct" style="left:198.8px;top:55px;">List</div>
<div class="a " style="left:156.8px;top:80px;font-size:5.2px;line-height:6px;color:#6d6460;letter-spacing:0.2px">VISITS</div>
<div class="a " style="left:155.1px;top:86px;font-size:15.5px;line-height:17.6px;color:#1a9fe0">List</div>
<div class="a " style="left:745.8px;top:75px;font-size:6.3px;line-height:7px;font-weight:bold;color:#149fe0;-webkit-text-stroke:0.1px #149fe0">Search</div>
<div class="a " style="left:127px;top:134px;font-size:6.56px;line-height:8px;color:#eaf6fd">Results</div>
<div class="a bt" style="left:151.2px;top:165px;color:#119fe0;word-spacing:1.6px">Event View</div>
<div class="a bt" style="left:211.6px;top:165px;color:#fff;word-spacing:1.6px">People View</div>
<div class="a bt" style="left:774.6px;top:165px;color:#119fe0">Day</div>
<div class="a bt" style="left:813px;top:165px;color:#119fe0">Week</div>
<div class="a bt" style="left:856.6px;top:165px;color:#fff">Month</div>
<div class="a th" style="left:172px;top:193px;">NAME</div>
<div class="a th" style="left:254.8px;top:193px;">COMPANY</div>
<div class="a th" style="left:329.1px;top:193px;">VEHICLE REGISTRATION</div>
<div class="a th" style="left:480.7px;top:193px;">EVENT</div>
<div class="a th" style="left:537.9px;top:193px;">SIGNED IN</div>
<div class="a th" style="left:649.5px;top:193px;">SIGNED OUT</div>
<div class="a " style="left:137px;top:218px;width:23.4px;text-align:center;font-size:9.5px;line-height:10px;letter-spacing:-0.3px;color:#2a9fe0;-webkit-text-stroke:0.1px #2a9fe0">HS</div>
<div class="a nm" style="left:172px;top:215px;">Harry Smith</div>
<div class="a vs" style="left:172px;top:226px;">Visitor</div>
<div class="a td" style="left:255.6px;top:221px;">-</div>
<div class="a td" style="left:329.6px;top:221px;">-</div>
<div class="a td" style="left:480.7px;top:221px;color:#1a9fe0">Visit</div>
<div class="a td" style="left:537.4px;top:221px;">-</div>
<div class="a td" style="left:649.4px;top:221px;">-</div>
<div class="a " style="left:137px;top:254px;width:23.4px;text-align:center;font-size:9.5px;line-height:10px;letter-spacing:-0.3px;color:#2a9fe0;-webkit-text-stroke:0.1px #2a9fe0">HS</div>
<div class="a nm" style="left:172px;top:251px;">Harry Smith</div>
<div class="a vs" style="left:172px;top:262px;">Visitor</div>
<div class="a td" style="left:255.6px;top:256px;">-</div>
<div class="a td" style="left:329.6px;top:256px;">-</div>
<div class="a td" style="left:480.7px;top:256px;color:#1a9fe0">Visit</div>
<div class="a td" style="left:537.4px;top:256px;">-</div>
<div class="a td" style="left:649.4px;top:256px;">-</div>
<div class="a " style="left:137px;top:290px;width:23.4px;text-align:center;font-size:9.5px;line-height:10px;letter-spacing:-0.3px;color:#2a9fe0;-webkit-text-stroke:0.1px #2a9fe0">JS</div>
<div class="a nm" style="left:172px;top:287px;">Jane Smith</div>
<div class="a vs" style="left:172px;top:297px;">Visitor</div>
<div class="a td" style="left:255.6px;top:292px;">-</div>
<div class="a td" style="left:329.6px;top:292px;">-</div>
<div class="a td" style="left:480.7px;top:292px;color:#1a9fe0">Visit</div>
<div class="a td" style="left:537.4px;top:292px;">02/10/2025 11:19</div>
<div class="a td" style="left:649.4px;top:292px;">03/10/2025 01:00</div>
<div class="a " style="left:137px;top:325px;width:23.4px;text-align:center;font-size:9.5px;line-height:10px;letter-spacing:-0.3px;color:#2a9fe0;-webkit-text-stroke:0.1px #2a9fe0">JS</div>
<div class="a nm" style="left:172px;top:322px;">John Smith</div>
<div class="a vs" style="left:172px;top:333px;">Visitor</div>
<div class="a td" style="left:255.6px;top:327px;">-</div>
<div class="a td" style="left:329.6px;top:327px;">-</div>
<div class="a td" style="left:480.7px;top:327px;color:#1a9fe0">Visit</div>
<div class="a td" style="left:537.4px;top:327px;">02/10/2025 11:18</div>
<div class="a td" style="left:649.4px;top:327px;">03/10/2025 01:00</div>
<div class="a pg" style="left:473.4px;top:356px;">«</div>
<div class="a pg" style="left:482.6px;top:356px;">Previous</div>
<div class="a pg" style="left:513px;top:356px;width:13.2px;text-align:center;color:#fff">1</div>
<div class="a pg" style="left:531.6px;top:356px;">Next</div>
<div class="a pg" style="left:551.2px;top:356px;">»</div>
</div>
</body></html>
